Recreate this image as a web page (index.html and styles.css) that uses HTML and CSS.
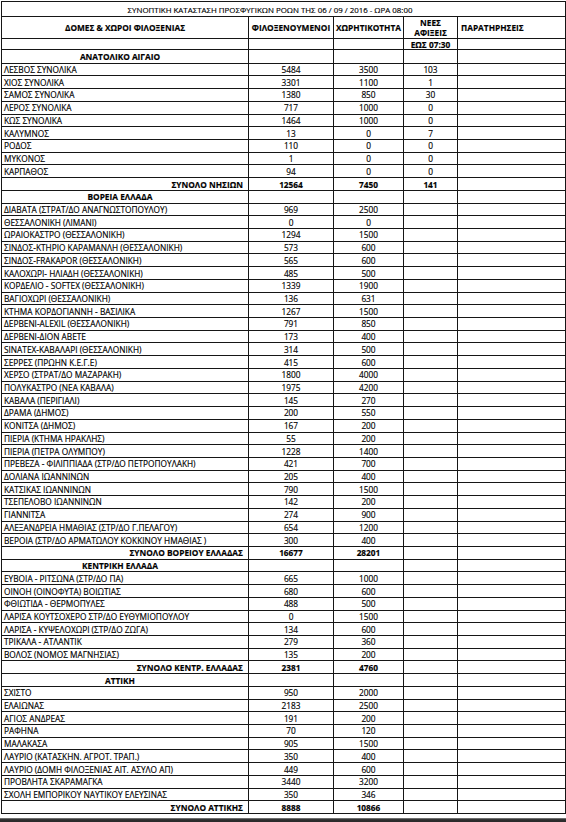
FILE: index.html
```html
<!DOCTYPE html>
<html lang="el">
<head>
<meta charset="utf-8">
<title>ΣΥΝΟΠΤΙΚΗ ΚΑΤΑΣΤΑΣΗ ΠΡΟΣΦΥΓΙΚΩΝ ΡΟΩΝ</title>
<link rel="stylesheet" href="styles.css">
</head>
<body>
<div class="page">
<div class="sheet" role="table">
<div class="row" role="row"><div class="cell title" role="cell">ΣΥΝΟΠΤΙΚΗ ΚΑΤΑΣΤΑΣΗ ΠΡΟΣΦΥΓΙΚΩΝ ΡΟΩΝ ΤΗΣ 06 / 09 / 2016 - ΩΡΑ 08:00</div></div>
<div class="row" role="row"><div class="cell b" role="columnheader">ΔΟΜΕΣ &amp; ΧΩΡΟΙ ΦΙΛΟΞΕΝΙΑΣ</div><div class="cell b" role="columnheader">ΦΙΛΟΞΕΝΟΥΜΕΝΟΙ</div><div class="cell b" role="columnheader">ΧΩΡΗΤΙΚΟΤΗΤΑ</div><div class="cell b stack" role="columnheader"><span>ΝΕΕΣ</span><span>ΑΦΙΞΕΙΣ</span></div><div class="cell b left" role="columnheader">ΠΑΡΑΤΗΡΗΣΕΙΣ</div></div>
<div class="row" role="row"><div class="cell"></div><div class="cell"></div><div class="cell"></div><div class="cell b">ΕΩΣ 07:30</div><div class="cell"></div></div>
<div class="row" role="row"><div class="cell b sec">ΑΝΑΤΟΛΙΚΟ ΑΙΓΑΙΟ</div><div class="cell"></div><div class="cell"></div><div class="cell"></div><div class="cell"></div></div>
<div class="row" role="row"><div class="cell name">ΛΕΣΒΟΣ ΣΥΝΟΛΙΚΑ</div><div class="cell">5484</div><div class="cell">3500</div><div class="cell">103</div><div class="cell"></div></div>
<div class="row" role="row"><div class="cell name">ΧΙΟΣ ΣΥΝΟΛΙΚΑ</div><div class="cell">3301</div><div class="cell">1100</div><div class="cell">1</div><div class="cell"></div></div>
<div class="row" role="row"><div class="cell name">ΣΑΜΟΣ ΣΥΝΟΛΙΚΑ</div><div class="cell">1380</div><div class="cell">850</div><div class="cell">30</div><div class="cell"></div></div>
<div class="row" role="row"><div class="cell name">ΛΕΡΟΣ ΣΥΝΟΛΙΚΑ</div><div class="cell">717</div><div class="cell">1000</div><div class="cell">0</div><div class="cell"></div></div>
<div class="row" role="row"><div class="cell name">ΚΩΣ ΣΥΝΟΛΙΚΑ</div><div class="cell">1464</div><div class="cell">1000</div><div class="cell">0</div><div class="cell"></div></div>
<div class="row" role="row"><div class="cell name">ΚΑΛΥΜΝΟΣ</div><div class="cell">13</div><div class="cell">0</div><div class="cell">7</div><div class="cell"></div></div>
<div class="row" role="row"><div class="cell name">ΡΟΔΟΣ</div><div class="cell">110</div><div class="cell">0</div><div class="cell">0</div><div class="cell"></div></div>
<div class="row" role="row"><div class="cell name">ΜΥΚΟΝΟΣ</div><div class="cell">1</div><div class="cell">0</div><div class="cell">0</div><div class="cell"></div></div>
<div class="row" role="row"><div class="cell name">ΚΑΡΠΑΘΟΣ</div><div class="cell">94</div><div class="cell">0</div><div class="cell">0</div><div class="cell"></div></div>
<div class="row" role="row"><div class="cell b sum">ΣΥΝΟΛΟ ΝΗΣΙΩΝ</div><div class="cell b">12564</div><div class="cell b">7450</div><div class="cell b">141</div><div class="cell"></div></div>
<div class="row" role="row"><div class="cell b sec">ΒΟΡΕΙΑ ΕΛΛΑΔΑ</div><div class="cell"></div><div class="cell"></div><div class="cell"></div><div class="cell"></div></div>
<div class="row" role="row"><div class="cell name">ΔΙΑΒΑΤΑ (ΣΤΡΑΤ/ΔΟ ΑΝΑΓΝΩΣΤΟΠΟΥΛΟΥ)</div><div class="cell">969</div><div class="cell">2500</div><div class="cell"></div><div class="cell"></div></div>
<div class="row" role="row"><div class="cell name">ΘΕΣΣΑΛΟΝΙΚΗ (ΛΙΜΑΝΙ)</div><div class="cell">0</div><div class="cell">0</div><div class="cell"></div><div class="cell"></div></div>
<div class="row" role="row"><div class="cell name">ΩΡΑΙΟΚΑΣΤΡΟ (ΘΕΣΣΑΛΟΝΙΚΗ)</div><div class="cell">1294</div><div class="cell">1500</div><div class="cell"></div><div class="cell"></div></div>
<div class="row" role="row"><div class="cell name">ΣΙΝΔΟΣ-ΚΤΗΡΙΟ ΚΑΡΑΜΑΝΛΗ (ΘΕΣΣΑΛΟΝΙΚΗ)</div><div class="cell">573</div><div class="cell">600</div><div class="cell"></div><div class="cell"></div></div>
<div class="row" role="row"><div class="cell name">ΣΙΝΔΟΣ-FRAKAPOR (ΘΕΣΣΑΛΟΝΙΚΗ)</div><div class="cell">565</div><div class="cell">600</div><div class="cell"></div><div class="cell"></div></div>
<div class="row" role="row"><div class="cell name">ΚΑΛΟΧΩΡΙ- ΗΛΙΑΔΗ (ΘΕΣΣΑΛΟΝΙΚΗ)</div><div class="cell">485</div><div class="cell">500</div><div class="cell"></div><div class="cell"></div></div>
<div class="row" role="row"><div class="cell name">ΚΟΡΔΕΛΙΟ - SOFTEX (ΘΕΣΣΑΛΟΝΙΚΗ)</div><div class="cell">1339</div><div class="cell">1900</div><div class="cell"></div><div class="cell"></div></div>
<div class="row" role="row"><div class="cell name">ΒΑΓΙΟΧΩΡΙ (ΘΕΣΣΑΛΟΝΙΚΗ)</div><div class="cell">136</div><div class="cell">631</div><div class="cell"></div><div class="cell"></div></div>
<div class="row" role="row"><div class="cell name">ΚΤΗΜΑ ΚΟΡΔΟΓΙΑΝΝΗ - ΒΑΣΙΛΙΚΑ</div><div class="cell">1267</div><div class="cell">1500</div><div class="cell"></div><div class="cell"></div></div>
<div class="row" role="row"><div class="cell name">ΔΕΡΒΕΝΙ-ALEXIL (ΘΕΣΣΑΛΟΝΙΚΗ)</div><div class="cell">791</div><div class="cell">850</div><div class="cell"></div><div class="cell"></div></div>
<div class="row" role="row"><div class="cell name">ΔΕΡΒΕΝΙ-ΔΙΟΝ ΑΒΕΤΕ</div><div class="cell">173</div><div class="cell">400</div><div class="cell"></div><div class="cell"></div></div>
<div class="row" role="row"><div class="cell name">SINATEX-ΚΑΒΑΛΑΡΙ (ΘΕΣΣΑΛΟΝΙΚΗ)</div><div class="cell">314</div><div class="cell">500</div><div class="cell"></div><div class="cell"></div></div>
<div class="row" role="row"><div class="cell name">ΣΕΡΡΕΣ (ΠΡΩΗΝ Κ.Ε.Γ.Ε)</div><div class="cell">415</div><div class="cell">600</div><div class="cell"></div><div class="cell"></div></div>
<div class="row" role="row"><div class="cell name">ΧΕΡΣΟ (ΣΤΡΑΤ/ΔΟ ΜΑΖΑΡΑΚΗ)</div><div class="cell">1800</div><div class="cell">4000</div><div class="cell"></div><div class="cell"></div></div>
<div class="row" role="row"><div class="cell name">ΠΟΛΥΚΑΣΤΡΟ (ΝΕΑ ΚΑΒΑΛΑ)</div><div class="cell">1975</div><div class="cell">4200</div><div class="cell"></div><div class="cell"></div></div>
<div class="row" role="row"><div class="cell name">ΚΑΒΑΛΑ (ΠΕΡΙΓΙΑΛΙ)</div><div class="cell">145</div><div class="cell">270</div><div class="cell"></div><div class="cell"></div></div>
<div class="row" role="row"><div class="cell name">ΔΡΑΜΑ (ΔΗΜΟΣ)</div><div class="cell">200</div><div class="cell">550</div><div class="cell"></div><div class="cell"></div></div>
<div class="row" role="row"><div class="cell name">ΚΟΝΙΤΣΑ (ΔΗΜΟΣ)</div><div class="cell">167</div><div class="cell">200</div><div class="cell"></div><div class="cell"></div></div>
<div class="row" role="row"><div class="cell name">ΠΙΕΡΙΑ (ΚΤΗΜΑ ΗΡΑΚΛΗΣ)</div><div class="cell">55</div><div class="cell">200</div><div class="cell"></div><div class="cell"></div></div>
<div class="row" role="row"><div class="cell name">ΠΙΕΡΙΑ (ΠΕΤΡΑ ΟΛΥΜΠΟΥ)</div><div class="cell">1228</div><div class="cell">1400</div><div class="cell"></div><div class="cell"></div></div>
<div class="row" role="row"><div class="cell name">ΠΡΕΒΕΖΑ - ΦΙΛΙΠΠΙΑΔΑ (ΣΤΡ/ΔΟ ΠΕΤΡΟΠΟΥΛΑΚΗ)</div><div class="cell">421</div><div class="cell">700</div><div class="cell"></div><div class="cell"></div></div>
<div class="row" role="row"><div class="cell name">ΔΟΛΙΑΝΑ ΙΩΑΝΝΙΝΩΝ</div><div class="cell">205</div><div class="cell">400</div><div class="cell"></div><div class="cell"></div></div>
<div class="row" role="row"><div class="cell name">ΚΑΤΣΙΚΑΣ ΙΩΑΝΝΙΝΩΝ</div><div class="cell">790</div><div class="cell">1500</div><div class="cell"></div><div class="cell"></div></div>
<div class="row" role="row"><div class="cell name">ΤΣΕΠΕΛΟΒΟ ΙΩΑΝΝΙΝΩΝ</div><div class="cell">142</div><div class="cell">200</div><div class="cell"></div><div class="cell"></div></div>
<div class="row" role="row"><div class="cell name">ΓΙΑΝΝΙΤΣΑ</div><div class="cell">274</div><div class="cell">900</div><div class="cell"></div><div class="cell"></div></div>
<div class="row" role="row"><div class="cell name">ΑΛΕΞΑΝΔΡΕΙΑ ΗΜΑΘΙΑΣ (ΣΤΡ/ΔΟ Γ.ΠΕΛΑΓΟΥ)</div><div class="cell">654</div><div class="cell">1200</div><div class="cell"></div><div class="cell"></div></div>
<div class="row" role="row"><div class="cell name">ΒΕΡΟΙΑ (ΣΤΡ/ΔΟ ΑΡΜΑΤΩΛΟΥ ΚΟΚΚΙΝΟΥ ΗΜΑΘΙΑΣ )</div><div class="cell">300</div><div class="cell">400</div><div class="cell"></div><div class="cell"></div></div>
<div class="row" role="row"><div class="cell b sum">ΣΥΝΟΛΟ ΒΟΡΕΙΟΥ ΕΛΛΑΔΑΣ</div><div class="cell b">16677</div><div class="cell b">28201</div><div class="cell"></div><div class="cell"></div></div>
<div class="row" role="row"><div class="cell b sec">ΚΕΝΤΡΙΚΗ ΕΛΛΑΔΑ</div><div class="cell"></div><div class="cell"></div><div class="cell"></div><div class="cell"></div></div>
<div class="row" role="row"><div class="cell name">ΕΥΒΟΙΑ - ΡΙΤΣΩΝΑ (ΣΤΡ/ΔΟ ΠΑ)</div><div class="cell">665</div><div class="cell">1000</div><div class="cell"></div><div class="cell"></div></div>
<div class="row" role="row"><div class="cell name">ΟΙΝΟΗ (ΟΙΝΟΦΥΤΑ) ΒΟΙΩΤΙΑΣ</div><div class="cell">680</div><div class="cell">600</div><div class="cell"></div><div class="cell"></div></div>
<div class="row" role="row"><div class="cell name">ΦΘΙΩΤΙΔΑ - ΘΕΡΜΟΠΥΛΕΣ</div><div class="cell">488</div><div class="cell">500</div><div class="cell"></div><div class="cell"></div></div>
<div class="row" role="row"><div class="cell name">ΛΑΡΙΣΑ ΚΟΥΤΣΟΧΕΡΟ ΣΤΡ/ΔΟ ΕΥΘΥΜΙΟΠΟΥΛΟΥ</div><div class="cell">0</div><div class="cell">1500</div><div class="cell"></div><div class="cell"></div></div>
<div class="row" role="row"><div class="cell name">ΛΑΡΙΣΑ - ΚΥΨΕΛΟΧΩΡΙ (ΣΤΡ/ΔΟ ΖΩΓΑ)</div><div class="cell">134</div><div class="cell">600</div><div class="cell"></div><div class="cell"></div></div>
<div class="row" role="row"><div class="cell name">ΤΡΙΚΑΛΑ - ΑΤΛΑΝΤΙΚ</div><div class="cell">279</div><div class="cell">360</div><div class="cell"></div><div class="cell"></div></div>
<div class="row" role="row"><div class="cell name">ΒΟΛΟΣ (ΝΟΜΟΣ ΜΑΓΝΗΣΙΑΣ)</div><div class="cell">135</div><div class="cell">200</div><div class="cell"></div><div class="cell"></div></div>
<div class="row" role="row"><div class="cell b sum">ΣΥΝΟΛΟ ΚΕΝΤΡ. ΕΛΛΑΔΑΣ</div><div class="cell b">2381</div><div class="cell b">4760</div><div class="cell"></div><div class="cell"></div></div>
<div class="row" role="row"><div class="cell b sec">ΑΤΤΙΚΗ</div><div class="cell"></div><div class="cell"></div><div class="cell"></div><div class="cell"></div></div>
<div class="row" role="row"><div class="cell name">ΣΧΙΣΤΟ</div><div class="cell">950</div><div class="cell">2000</div><div class="cell"></div><div class="cell"></div></div>
<div class="row" role="row"><div class="cell name">ΕΛΑΙΩΝΑΣ</div><div class="cell">2183</div><div class="cell">2500</div><div class="cell"></div><div class="cell"></div></div>
<div class="row" role="row"><div class="cell name">ΑΓΙΟΣ ΑΝΔΡΕΑΣ</div><div class="cell">191</div><div class="cell">200</div><div class="cell"></div><div class="cell"></div></div>
<div class="row" role="row"><div class="cell name">ΡΑΦΗΝΑ</div><div class="cell">70</div><div class="cell">120</div><div class="cell"></div><div class="cell"></div></div>
<div class="row" role="row"><div class="cell name">ΜΑΛΑΚΑΣΑ</div><div class="cell">905</div><div class="cell">1500</div><div class="cell"></div><div class="cell"></div></div>
<div class="row" role="row"><div class="cell name">ΛΑΥΡΙΟ (ΚΑΤΑΣΚΗΝ. ΑΓΡΟΤ. ΤΡΑΠ.)</div><div class="cell">350</div><div class="cell">400</div><div class="cell"></div><div class="cell"></div></div>
<div class="row" role="row"><div class="cell name">ΛΑΥΡΙΟ (ΔΟΜΗ ΦΙΛΟΞΕΝΙΑΣ ΑΙΤ. ΑΣΥΛΟ ΑΠ)</div><div class="cell">449</div><div class="cell">600</div><div class="cell"></div><div class="cell"></div></div>
<div class="row" role="row"><div class="cell name">ΠΡΟΒΛΗΤΑ ΣΚΑΡΑΜΑΓΚΑ</div><div class="cell">3440</div><div class="cell">3200</div><div class="cell"></div><div class="cell"></div></div>
<div class="row" role="row"><div class="cell name">ΣΧΟΛΗ ΕΜΠΟΡΙΚΟΥ ΝΑΥΤΙΚΟΥ ΕΛΕΥΣΙΝΑΣ</div><div class="cell">350</div><div class="cell">346</div><div class="cell"></div><div class="cell"></div></div>
<div class="row" role="row"><div class="cell b sum">ΣΥΝΟΛΟ ΑΤΤΙΚΗΣ</div><div class="cell b">8888</div><div class="cell b">10866</div><div class="cell"></div><div class="cell"></div></div>
</div>
<div class="edge"></div>
</div>
</body>
</html>
```
FILE: styles.css
```css
html, body {
  margin: 0;
  padding: 0;
  background: #ffffff;
}

.page {
  display: flex;
  flex-direction: column;
  height: 822px;
  padding: 1px 0 0 1px;
  box-sizing: border-box;
  font-family: "Open Sans", "Noto Sans", "DejaVu Sans", sans-serif;
  color: #000;
}

.sheet {
  display: grid;
  grid-template-columns: 246px 84px 69px 53px 107px;
  grid-template-rows: 14px 21.3px 9.7px 12.7px;
  grid-auto-rows: 11.73px;
  gap: 1px;
  padding: 1px;
  width: max-content;
  background: #161616;
  font-size: 8.3px;
  line-height: 10px;
  -webkit-text-stroke: 0.15px #000;
}

.row {
  display: contents;
}

.cell {
  display: flex;
  align-items: center;
  justify-content: center;
  padding: 1px 2px 0 2px;
  background: #ffffff;
  white-space: nowrap;
  overflow: hidden;
  min-width: 0;
}

.title {
  grid-column: 1 / -1;
  padding-right: 29px;
  font-size: 7.9px;
}

.b {
  font-weight: 700;
}

.stack {
  flex-direction: column;
}

.left {
  justify-content: flex-start;
  padding-left: 3px;
}

.name {
  justify-content: flex-start;
  padding-left: 2px;
}

.sum {
  justify-content: flex-end;
  padding-right: 5px;
}

.sec {
  padding-right: 12px;
}

.edge {
  margin-top: auto;
  margin-left: -1px;
  height: 4px;
  background: linear-gradient(#8a8a8a, #2e2e2e 40%, #2a2a2a);
}
```
